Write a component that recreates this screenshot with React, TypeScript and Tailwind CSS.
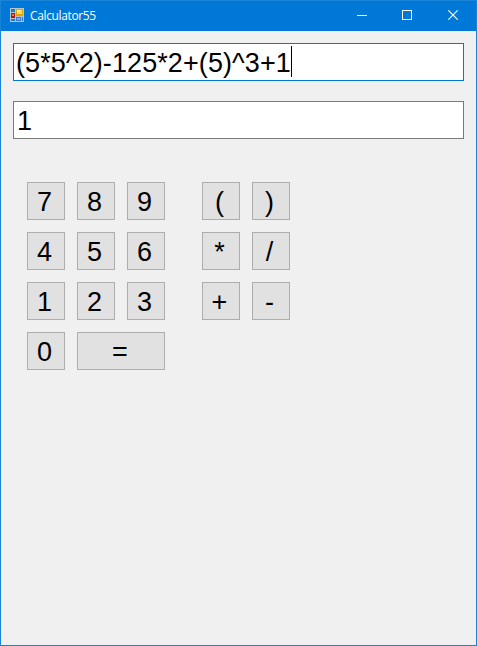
import React from "react";

const LEFT_KEYS = ["7", "8", "9", "4", "5", "6", "1", "2", "3", "0"];
const RIGHT_KEYS = ["(", ")", "*", "/", "+", "-"];

function Key({ label, wide = false }: { label: string; wide?: boolean }) {
  return (
    <button
      className={`flex h-[38px] items-center justify-center border border-[#adadad] bg-[#e1e1e1] pt-[3px] text-[27px] leading-none text-black ${
        wide ? "col-span-2 pr-[2px]" : "pr-[3px]"
      }`}
    >
      {label}
    </button>
  );
}

function AppIcon() {
  return (
    <svg width="14" height="14" viewBox="0 0 14 14" shapeRendering="crispEdges">
      <path d="M0 0h5v5H0zM5 0h9v9H5zM0 4h6v7H0zM0 10h5v4H0zM5 8h9v6H5z" fill="#b9c3cc" />
      <path d="M1 1h4v3H1z" fill="#1f7dcd" />
      <path d="M1 5h4v5H1z" fill="#a51c16" />
      <path d="M2 6h2v2H2z" fill="#ea7762" />
      <path d="M6 1h7v7H6z" fill="#e5a300" />
      <path d="M7 2h5v4H7z" fill="#ffd957" />
      <path d="M7 2h3v2H7z" fill="#fff0a3" />
      <path d="M6 9h5v4H6z" fill="#3f73d6" />
      <path d="M7 10h3v2H7z" fill="#84adf4" />
      <path d="M12 9h1v4h-1z" fill="#1f7dcd" />
      <path d="M1 11h4v2H1z" fill="#1f7dcd" />
    </svg>
  );
}

export default function App() {
  return (
    <div className="flex h-[646px] w-[477px] flex-col border border-[#1883d7] bg-[#f0f0f0] font-['Liberation_Sans',Arial,sans-serif] text-black">
      <header className="flex h-[30px] shrink-0 items-center bg-[#0078d7] pb-[2px] pl-[9px] text-white">
        <AppIcon />
        <h1 className="ml-[6px] pt-[2px] font-['Open_Sans','Noto_Sans',sans-serif] text-[12px] leading-none tracking-[-0.36px]">
          Calculator55
        </h1>
        <div className="ml-auto flex h-full">
          <button aria-label="Minimize" className="flex w-[45px] items-center justify-center pr-px">
            <svg width="10" height="10" shapeRendering="crispEdges">
              <path d="M0 5h10v1H0z" fill="white" />
            </svg>
          </button>
          <button aria-label="Maximize" className="flex w-[45px] items-center justify-center pr-px">
            <svg width="10" height="10" shapeRendering="crispEdges">
              <path d="M.5 .5h9v9h-9z" fill="none" stroke="white" />
            </svg>
          </button>
          <button aria-label="Close" className="flex w-[46px] items-center justify-center">
            <svg width="10" height="10">
              <path d="M.3 .3l9.4 9.4M9.7 .3L.3 9.7" fill="none" stroke="white" strokeWidth="1.1" />
            </svg>
          </button>
        </div>
      </header>

      <main className="px-3 pt-3">
        <div className="flex h-[38px] items-start border border-[#0078d7] bg-white pl-[2px] pt-[2px] text-[27px] leading-none">
          <span className="pt-[4px] tracking-[0.09px]">(5*5^2)-125*2+(5)^3+1</span>
          <span className="h-[31px] w-px bg-black" />
        </div>
        <div className="mt-5 flex h-[38px] items-start border border-[#7a7a7a] bg-white pl-[3px] pt-[6px] text-[27px] leading-none">
          <span>1</span>
        </div>

        <div className="mt-[43px] flex items-start gap-[37px] pl-[14px]">
          <div className="grid grid-cols-[38px_38px_38px] gap-3">
            {LEFT_KEYS.map((k) => (
              <Key key={k} label={k} />
            ))}
            <Key label="=" wide />
          </div>
          <div className="grid grid-cols-[38px_38px] gap-3">
            {RIGHT_KEYS.map((k) => (
              <Key key={k} label={k} />
            ))}
          </div>
        </div>
      </main>
    </div>
  );
}
